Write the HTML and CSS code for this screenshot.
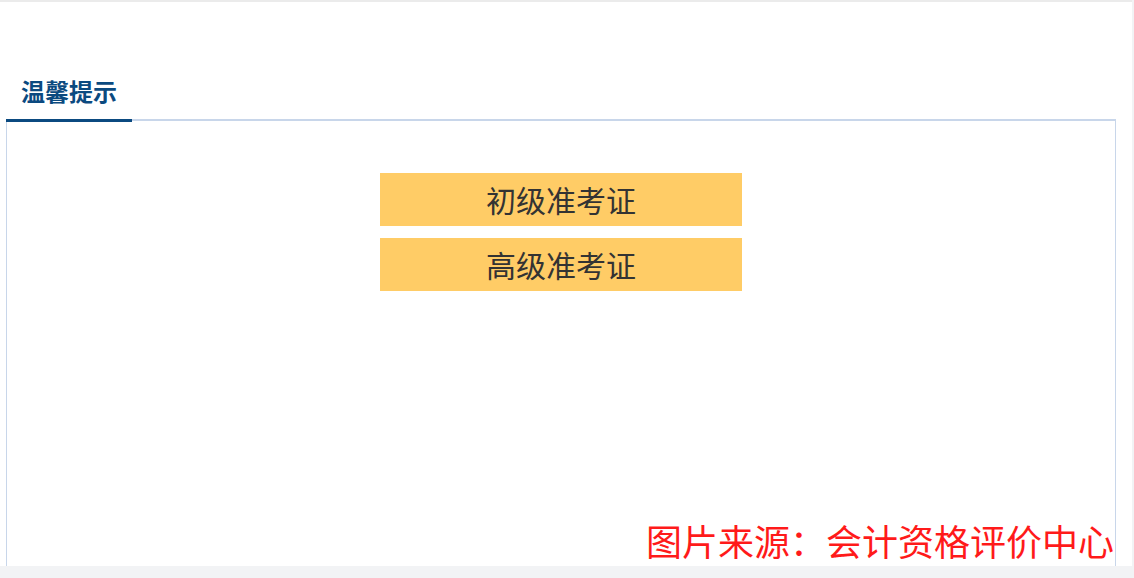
FILE: index.html
```html
<!DOCTYPE html>
<html lang="zh-CN">
<head>
  <meta charset="UTF-8">
  <meta name="viewport" content="width=device-width, initial-scale=1.0">
  <title>温馨提示</title>
  <link rel="stylesheet" href="styles.css">
</head>
<body>
  <div class="page">
    <div class="tabs">
      <div class="tab active">温馨提示</div>
    </div>
    <div class="panel">
      <a class="ticket-button" href="#">初级准考证</a>
      <a class="ticket-button" href="#">高级准考证</a>
    </div>
    <div class="source">图片来源：会计资格评价中心</div>
  </div>
</body>
</html>
```
FILE: styles.css
```css
/* General Styles */
body {
  margin: 0;
  background: #f2f3f5;
  font-family: "Noto Sans CJK SC", "Noto Sans", sans-serif;
  color: #333;
}

.page {
  position: relative;
  width: 1132px;
  height: 566px;
  background: #fff;
  border-top: 2px solid #ebebeb;
  padding: 77px 0 0 6px;
  box-sizing: border-box;
  overflow: hidden;
}

/* Tabs */
.tabs {
  display: flex;
  width: 1110px;
  border-bottom: 2px solid #c8d6ea;
}

.tab {
  padding: 0 15px;
  height: 40px;
  line-height: 24px;
  font-size: 24px;
  font-weight: 700;
  color: #0b4a80;
  margin-bottom: -3px;
}

.tab.active {
  border-bottom: 3px solid #0b4a80;
}

/* Panel */
.panel {
  width: 1110px;
  height: 600px;
  box-sizing: border-box;
  border: 1px solid #c8d6ea;
  border-top: none;
  display: flex;
  flex-direction: column;
  align-items: center;
  gap: 12px;
  padding-top: 52px;
}

.ticket-button {
  display: block;
  width: 362px;
  height: 53px;
  line-height: 53px;
  background: #ffcc66;
  color: #333;
  font-size: 30px;
  text-align: center;
  text-decoration: none;
}

/* Watermark */
.source {
  position: absolute;
  right: 18px;
  bottom: 3px;
  font-size: 36px;
  line-height: 46px;
  color: #ff1a1a;
}
```
